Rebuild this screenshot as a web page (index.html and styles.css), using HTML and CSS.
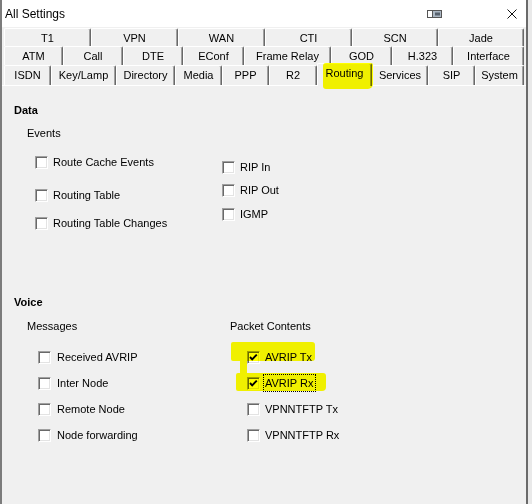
FILE: index.html
```html
<!DOCTYPE html>
<html lang="en">
<head>
<meta charset="utf-8">
<title>All Settings</title>
<link rel="stylesheet" href="styles.css">
</head>
<body>
<div class="window">
  <div class="titlebar">
    <span class="title">All Settings</span>
    <svg class="snap-icon" viewBox="0 0 15 8" width="15" height="8">
      <rect x="0.5" y="0.5" width="14" height="7" fill="#fff" stroke="#555"/>
      <rect x="6" y="1" width="8" height="6" fill="#aab6c2"/>
      <line x1="5.5" y1="0.5" x2="5.5" y2="7.5" stroke="#555"/>
      <rect x="8" y="2.5" width="5" height="3" fill="#56606c"/>
    </svg>
    <svg class="close-icon" viewBox="0 0 10 10" width="10" height="10">
      <path d="M0.5 0.5 L9.5 9.5 M9.5 0.5 L0.5 9.5" stroke="#111" stroke-width="1" fill="none"/>
    </svg>
  </div>

  <div class="tabs">
    <div class="tab-row row1">
      <div class="tab w87">T1</div>
      <div class="tab w87">VPN</div>
      <div class="tab w87">WAN</div>
      <div class="tab w87">CTI</div>
      <div class="tab w86">SCN</div>
      <div class="tab w86">Jade</div>
    </div>
    <div class="tab-row row2">
      <div class="tab w59">ATM</div>
      <div class="tab w60">Call</div>
      <div class="tab w60">DTE</div>
      <div class="tab w61">EConf</div>
      <div class="tab w87">Frame Relay</div>
      <div class="tab w61">GOD</div>
      <div class="tab w61">H.323</div>
      <div class="tab w71">Interface</div>
    </div>
    <div class="tab-row row3">
      <div class="tab w47">ISDN</div>
      <div class="tab w65">Key/Lamp</div>
      <div class="tab w59">Directory</div>
      <div class="tab w47">Media</div>
      <div class="tab w47">PPP</div>
      <div class="tab w48">R2</div>
      <div class="tab w55 selected">Routing<span class="marker marker-tab"></span></div>
      <div class="tab w56">Services</div>
      <div class="tab w47">SIP</div>
      <div class="tab w49">System</div>
    </div>
  </div>

  <div class="panel">
    <div class="section-title">Data</div>
    <div class="group-label events-label">Events</div>
    <div class="data-cols">
      <div class="col data-a">
        <div class="item"><span class="box"></span><span class="text">Route Cache Events</span></div>
        <div class="item"><span class="box"></span><span class="text">Routing Table</span></div>
        <div class="item"><span class="box"></span><span class="text">Routing Table Changes</span></div>
      </div>
      <div class="col data-b">
        <div class="item"><span class="box"></span><span class="text">RIP In</span></div>
        <div class="item"><span class="box"></span><span class="text">RIP Out</span></div>
        <div class="item"><span class="box"></span><span class="text">IGMP</span></div>
      </div>
    </div>

    <div class="section-title voice-title">Voice</div>
    <div class="voice-cols">
      <div class="col voice-a">
        <div class="group-label">Messages</div>
        <div class="item"><span class="box"></span><span class="text">Received AVRIP</span></div>
        <div class="item"><span class="box"></span><span class="text">Inter Node</span></div>
        <div class="item"><span class="box"></span><span class="text">Remote Node</span></div>
        <div class="item"><span class="box"></span><span class="text">Node forwarding</span></div>
      </div>
      <div class="col voice-b">
        <div class="group-label">Packet Contents</div>
        <div class="item">
          <span class="box"><svg class="check" viewBox="0 0 11 11" width="11" height="11"><path d="M2 5 L4.2 7.3 L8.8 2.6" stroke="#000" stroke-width="1.9" fill="none"/></svg></span>
          <span class="text">AVRIP Tx</span>
          <span class="marker marker-tx"></span>
          <span class="marker marker-link"></span>
        </div>
        <div class="item">
          <span class="box"><svg class="check" viewBox="0 0 11 11" width="11" height="11"><path d="M2 5 L4.2 7.3 L8.8 2.6" stroke="#000" stroke-width="1.9" fill="none"/></svg></span>
          <span class="text focused">AVRIP Rx</span>
          <span class="marker marker-rx"></span>
        </div>
        <div class="item"><span class="box"></span><span class="text">VPNNTFTP Tx</span></div>
        <div class="item"><span class="box"></span><span class="text">VPNNTFTP Rx</span></div>
      </div>
    </div>
  </div>
</div>
</body>
</html>
```

FILE: styles.css
```css
* { box-sizing: border-box; }

html, body {
  margin: 0;
  padding: 0;
}

body {
  width: 532px;
  height: 504px;
  overflow: hidden;
  background: #e9e9e9;
  font-family: "Liberation Sans", Arial, sans-serif;
  font-size: 11px;
  color: #000;
}

.window {
  width: 528px;
  height: 504px;
  display: flex;
  flex-direction: column;
  background: #f0f0f0;
  border-left: 2px solid #7c7c7c;
  border-right: 2px solid #6a6a6a;
}

/* title bar */
.titlebar {
  flex: none;
  height: 27px;
  display: flex;
  align-items: center;
  background: #fff;
  padding-left: 3px;
}

.title {
  font-size: 12px;
  line-height: 16px;
}

.snap-icon {
  display: block;
  margin-left: auto;
}

.close-icon {
  display: block;
  margin-left: 65px;
  margin-right: 9px;
}

/* tabs */
.tabs {
  flex: none;
  padding: 1px 0 0 2px;
}

.tab-row {
  display: flex;
}

.row1 { height: 18px; }
.row2 { height: 19px; }
.row3 { height: 20px; }

.tab {
  flex: none;
  height: 100%;
  text-align: center;
  white-space: nowrap;
  background: #f0f0f0;
  border-top: 1px solid #fff;
  border-left: 1px solid #fff;
  border-right: 1px solid #696969;
  box-shadow: inset -1px 0 #a0a0a0;
  border-radius: 2px 2px 0 0;
  padding-top: 2px;
  line-height: 15px;
}

.w47 { width: 47px; }
.w48 { width: 48px; }
.w49 { width: 49px; }
.w55 { width: 55px; }
.w56 { width: 56px; }
.w59 { width: 59px; }
.w60 { width: 60px; }
.w61 { width: 61px; }
.w65 { width: 65px; }
.w71 { width: 71px; }
.w86 { width: 86px; }
.w87 { width: 87px; }

.tab.selected {
  position: relative;
  height: 23px;
  margin-top: -2px;
  padding-top: 2px;
}

/* highlighter annotations */
.marker {
  position: absolute;
  background: #ffff00;
  mix-blend-mode: multiply;
  pointer-events: none;
}

.marker-tab {
  left: 5px;
  top: -1px;
  width: 50px;
  height: 26px;
  border-radius: 3px 2px 5px 3px;
}

.marker-tx {
  left: 1px;
  top: -8px;
  width: 84px;
  height: 19px;
  border-radius: 2px 3px 3px 2px;
}

.marker-link {
  left: 10px;
  top: 10px;
  width: 7px;
  height: 14px;
}

.marker-rx {
  left: 6px;
  top: -3px;
  width: 90px;
  height: 18px;
  border-radius: 2px 3px 4px 2px;
}

/* panel */
.panel {
  flex: 1;
  border-top: 1px solid #fff;
  padding: 17px 0 0 12px;
}

.section-title {
  font-weight: bold;
  line-height: 14px;
}

.group-label {
  line-height: 14px;
}

.events-label {
  margin: 9px 0 0 13px;
}

.col {
  display: flex;
  flex-direction: column;
}

.item {
  position: relative;
  display: flex;
  align-items: center;
  gap: 5px;
  height: 14px;
  white-space: nowrap;
}

.text {
  line-height: 14px;
}

.box {
  flex: none;
  width: 13px;
  height: 13px;
  background: #fff;
  border: 1px solid;
  border-color: #a0a0a0 #fff #fff #a0a0a0;
  box-shadow: inset 1px 1px #696969, inset -1px -1px #e3e3e3;
}

.check {
  display: block;
}

.focused {
  outline: 1px dotted #000;
  outline-offset: 1px;
}

/* data section */
.data-cols {
  display: flex;
  margin-left: 21px;
}

.data-a { width: 187px; }

.data-a .item:nth-child(1) { margin-top: 15px; }
.data-a .item:nth-child(2) { margin-top: 19px; }
.data-a .item:nth-child(3) { margin-top: 14px; }

.data-b .item:nth-child(1) { margin-top: 20px; }
.data-b .item:nth-child(2) { margin-top: 9px; }
.data-b .item:nth-child(3) { margin-top: 10px; }

/* voice section */
.voice-title {
  margin-top: 65px;
}

.voice-cols {
  display: flex;
  margin: 10px 0 0 13px;
}

.voice-a { width: 203px; }

.voice-a .item { padding-left: 11px; gap: 6px; }
.voice-b .item { padding-left: 17px; }

.voice-cols .item { margin-top: 12px; }
.voice-cols .group-label + .item { margin-top: 17px; }
```
